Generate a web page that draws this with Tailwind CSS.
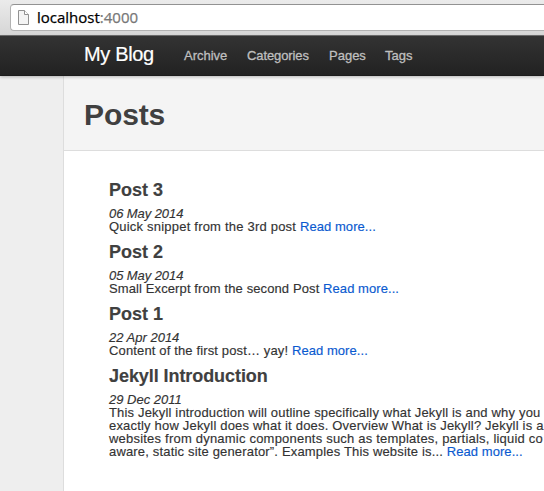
<!DOCTYPE html>
<html lang="en">
<head>
<meta charset="utf-8">
<title>My Blog</title>
<script src="https://cdn.jsdelivr.net/npm/@tailwindcss/browser@4"></script>
</head>
<body class="w-[544px] h-[491px] overflow-hidden flex flex-col bg-white font-['Liberation_Sans',Arial,sans-serif] text-[13px] leading-[13px] text-[#333]">
  <div class="h-9 shrink-0 pt-1 pl-[10px] bg-linear-to-b from-[#ebebeb] to-[#d6d6d6] border-b border-[#6f6f6f]">
    <div class="h-[27px] flex items-center bg-white border border-r-0 border-[#b2b2b2] border-t-[#929292] rounded-l-[4px] pl-[6px]">
      <svg class="w-[13px] h-4 shrink-0" viewBox="0 0 13 16" fill="none">
        <path d="M1.5 0.5H7.5L11.5 4.5V14.5H1.5Z" fill="#f4f4f4" stroke="#919191"/>
        <path d="M7.5 0.5V4.5H11.5" fill="#fff" stroke="#919191"/>
      </svg>
      <span class="ml-[7px] mb-0.5 font-['Open_Sans',sans-serif] text-[15px] leading-5 text-black [-webkit-text-stroke:0.25px] whitespace-nowrap">localhost<span class="text-[#777]">:4000</span></span>
    </div>
  </div>
  <header class="relative z-10 h-10 shrink-0 flex items-center pl-[84px] bg-linear-to-b from-[#333] to-[#222] border-b border-[#1c1c1c] shadow-[0_1px_3px_rgba(0,0,0,0.25)] whitespace-nowrap">
    <a class="w-[100px] pb-[3px] text-[20px] leading-5 text-white tracking-[-0.35px] [-webkit-text-stroke:0.2px]">My Blog</a>
    <nav class="flex text-[#bfbfbf] [-webkit-text-stroke:0.3px]">
      <a class="w-[63px]">Archive</a>
      <a class="w-[82px] tracking-[-0.1px]">Categories</a>
      <a class="w-14">Pages</a>
      <a>Tags</a>
    </nav>
  </header>
  <div class="flex flex-1 bg-[#eee]">
    <main class="ml-[63px] flex-1 min-w-0 bg-white border-l border-[#ddd]">
      <div class="h-[75px] pl-5 pt-[3px] flex items-center bg-[#f4f4f4] border-b border-[#ddd]">
        <h1 class="text-[30px] leading-9 font-bold text-[#404040] tracking-[-0.1px]">Posts</h1>
      </div>
      <div class="pl-[45px] pt-5 whitespace-nowrap [-webkit-text-stroke:0.15px]">
        <article>
          <h3 class="h-9 pt-px text-[18px] leading-9 font-bold text-[#404040]">Post 3</h3>
          <p class="italic tracking-[-0.08px]">06 May 2014</p>
          <p class="tracking-[0.21px]">Quick snippet from the 3rd post <a class="text-[#0a5ad0] tracking-[0.06px]">Read more...</a></p>
        </article>
        <article>
          <h3 class="h-9 pt-px text-[18px] leading-9 font-bold text-[#404040]">Post 2</h3>
          <p class="italic tracking-[-0.08px]">05 May 2014</p>
          <p class="tracking-[0.11px]">Small Excerpt from the second Post <a class="text-[#0a5ad0] tracking-[0.06px]">Read more...</a></p>
        </article>
        <article>
          <h3 class="h-9 pt-px text-[18px] leading-9 font-bold text-[#404040]">Post 1</h3>
          <p class="italic">22 Apr 2014</p>
          <p class="tracking-[0.14px]">Content of the first post… yay! <a class="text-[#0a5ad0] tracking-[0.06px]">Read more...</a></p>
        </article>
        <article>
          <h3 class="h-9 pt-px text-[18px] leading-9 font-bold text-[#404040] tracking-[-0.07px]">Jekyll Introduction</h3>
          <p class="italic">29 Dec 2011</p>
          <p class="tracking-[0.17px]">This Jekyll introduction will outline specifically what Jekyll is and why you<br><span class="tracking-[0.19px]">exactly how Jekyll does what it does. Overview What is Jekyll? Jekyll is a</span><br><span class="tracking-[0.21px]">websites from dynamic components such as templates, partials, liquid co</span><br>aware, static site generator”. Examples This website is... <a class="text-[#0a5ad0] tracking-[0.06px]">Read more...</a></p>
        </article>
      </div>
    </main>
  </div>
</body>
</html>
